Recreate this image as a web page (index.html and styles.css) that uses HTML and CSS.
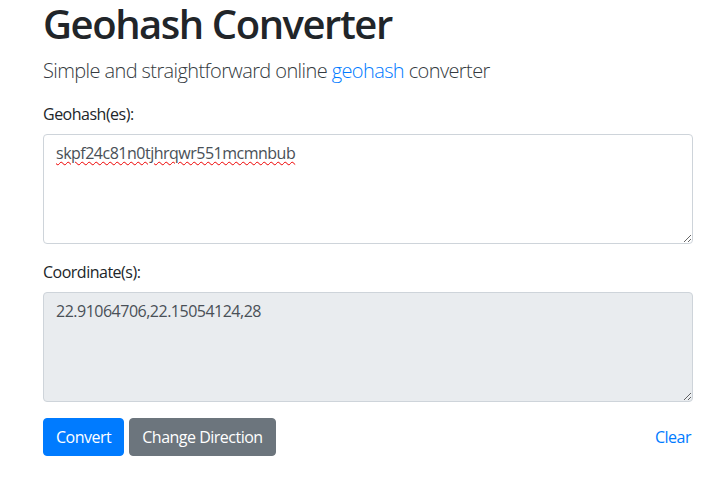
FILE: index.html
```html
<!DOCTYPE html>
<html lang="en">
<head>
<meta charset="utf-8">
<title>Geohash Converter</title>
<link rel="stylesheet" href="styles.css">
</head>
<body>
<div class="container">
  <h1 class="title">Geohash Converter</h1>
  <p class="lead">Simple and straightforward online <a href="#">geohash</a> converter</p>
  <div class="form-group">
    <label class="label">Geohash(es):</label>
    <div class="field" role="textbox"><span class="misspelled">skpf24c81n0tjhrqwr551mcmnbub</span></div>
  </div>
  <div class="form-group">
    <label class="label">Coordinate(s):</label>
    <div class="field readonly" role="textbox">22.91064706,22.15054124,28</div>
  </div>
  <div class="actions">
    <button class="btn btn-primary">Convert</button>
    <button class="btn btn-secondary">Change Direction</button>
    <a class="clear" href="#">Clear</a>
  </div>
</div>
</body>
</html>
```
FILE: styles.css
```css
html, body {
  margin: 0;
  padding: 0;
  background: #fff;
}
body {
  font-family: "Open Sans", "Noto Sans", sans-serif;
  font-size: 16px;
  line-height: 1.5;
  letter-spacing: -0.5px;
  color: #212529;
}
.container {
  width: 650px;
  margin: 0 0 0 43px;
}
.title {
  margin: 0 0 8px;
  font-size: 40px;
  font-weight: 600;
  line-height: 48px;
  letter-spacing: -1.45px;
  color: #212529;
}
.lead {
  margin: 0 0 16px;
  font-size: 20px;
  font-weight: 300;
  line-height: 30px;
  letter-spacing: -0.6px;
  color: #343a40;
}
.lead a {
  color: #007bff;
  text-decoration: none;
}
.form-group {
  margin-bottom: 16px;
}
.label {
  display: block;
  margin-bottom: 8px;
  line-height: 24px;
}
.field {
  box-sizing: border-box;
  height: 110px;
  padding: 6px 12px;
  border: 1px solid #ced4da;
  border-radius: 4px;
  color: #495057;
  background: #fff;
  line-height: 24px;
  overflow: auto;
  resize: vertical;
}
.field.readonly {
  background: #e9ecef;
}
.misspelled {
  text-decoration: underline wavy #e00;
  text-decoration-thickness: 1px;
  text-underline-offset: 2px;
}
.actions {
  display: flex;
  align-items: center;
  gap: 5px;
}
.btn {
  font-family: inherit;
  font-size: 16px;
  line-height: 24px;
  letter-spacing: -0.5px;
  padding: 6px 12px;
  border: 1px solid transparent;
  border-radius: 4px;
  color: #fff;
  cursor: pointer;
}
.btn-primary {
  background: #007bff;
  border-color: #007bff;
}
.btn-secondary {
  background: #6c757d;
  border-color: #6c757d;
}
.clear {
  margin-left: auto;
  margin-right: 2px;
  color: #007bff;
  text-decoration: none;
}
```
